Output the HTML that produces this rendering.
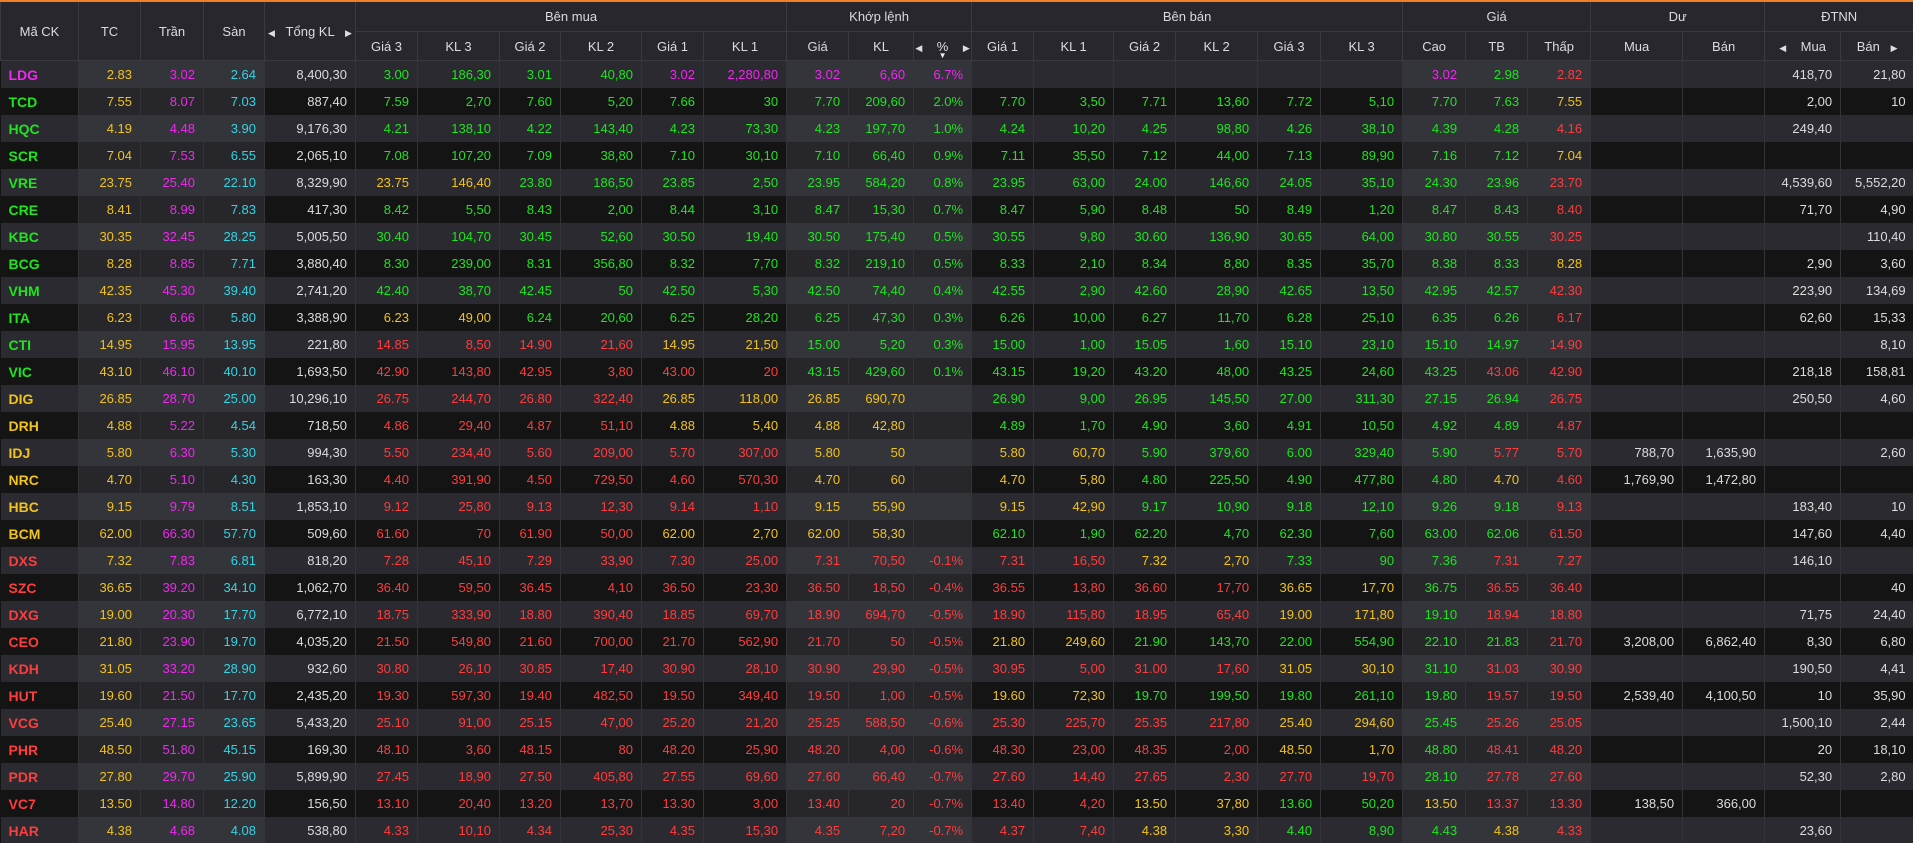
<!DOCTYPE html>
<html><head><meta charset="utf-8">
<style>
html,body{margin:0;padding:0;background:#141414;width:1913px;height:843px;overflow:hidden}
table{border-collapse:collapse;table-layout:fixed;width:1913px;font-family:"Liberation Sans",Arial,sans-serif;font-size:13px}
thead th{background:#27272d;color:#dcdcdc;font-weight:normal;border:1px solid #3a3a42;text-align:center;padding:0;white-space:nowrap}
thead tr.r1 th{height:29px;border-top:2px solid #f08020}
thead tr.r2 th{height:28px}
tbody td{height:27px;padding:0 8px 0 0;text-align:right;border-left:1px solid #333338;white-space:nowrap;overflow:hidden}
tbody tr:nth-child(odd) td{background:#2a2a30}
tbody tr:nth-child(even) td{background:#141414}
tbody tr:nth-child(odd) td:nth-child(2),tbody tr:nth-child(odd) td:nth-child(3),tbody tr:nth-child(odd) td:nth-child(4),
tbody tr:nth-child(odd) td:nth-child(12),tbody tr:nth-child(odd) td:nth-child(13),tbody tr:nth-child(odd) td:nth-child(14),
tbody tr:nth-child(odd) td:nth-child(21),tbody tr:nth-child(odd) td:nth-child(22),tbody tr:nth-child(odd) td:nth-child(23){background:#34343b}
tbody tr:nth-child(even) td:nth-child(2),tbody tr:nth-child(even) td:nth-child(3),tbody tr:nth-child(even) td:nth-child(4),
tbody tr:nth-child(even) td:nth-child(12),tbody tr:nth-child(even) td:nth-child(13),tbody tr:nth-child(even) td:nth-child(14),
tbody tr:nth-child(even) td:nth-child(21),tbody tr:nth-child(even) td:nth-child(22),tbody tr:nth-child(even) td:nth-child(23){background:#26262b}
tbody td:first-child{text-align:left;padding-left:8px;font-weight:bold;font-size:14px;border-left:none}
td{color:#dcdcdc}
.g{color:#1ee51e}.r{color:#ff3d3d}.y{color:#f2c31a}.m{color:#f028f0}.c{color:#2fd6e6}
.ar{font-size:9px;color:#ddd}
.pc{position:relative}
.pc .dn{position:absolute;left:50%;margin-left:-4px;bottom:0;font-size:8px;line-height:9px;color:#eee}
</style></head><body>
<table>
<colgroup>
<col style="width:78px"><col style="width:62px"><col style="width:63px"><col style="width:61px"><col style="width:91px">
<col style="width:62px"><col style="width:82px"><col style="width:61px"><col style="width:81px"><col style="width:62px"><col style="width:83px">
<col style="width:62px"><col style="width:65px"><col style="width:58px">
<col style="width:62px"><col style="width:80px"><col style="width:62px"><col style="width:82px"><col style="width:63px"><col style="width:82px">
<col style="width:63px"><col style="width:62px"><col style="width:63px">
<col style="width:92px"><col style="width:82px"><col style="width:76px"><col style="width:73px">
</colgroup>
<thead>
<tr class="r1">
<th rowspan="2">Mã CK</th><th rowspan="2">TC</th><th rowspan="2">Trần</th><th rowspan="2">Sàn</th><th rowspan="2"><span class="ar">◀</span>&nbsp;&nbsp; Tổng KL &nbsp;&nbsp;<span class="ar">▶</span></th>
<th colspan="6">Bên mua</th><th colspan="3">Khớp lệnh</th><th colspan="6">Bên bán</th><th colspan="3">Giá</th><th colspan="2">Dư</th><th colspan="2">ĐTNN</th>
</tr>
<tr class="r2">
<th>Giá 3</th><th>KL 3</th><th>Giá 2</th><th>KL 2</th><th>Giá 1</th><th>KL 1</th>
<th>Giá</th><th>KL</th><th class="pc"><span class="ar">◀</span>&nbsp;&nbsp;&nbsp; % &nbsp;&nbsp;&nbsp;<span class="ar">▶</span><span class="dn">▼</span></th>
<th>Giá 1</th><th>KL 1</th><th>Giá 2</th><th>KL 2</th><th>Giá 3</th><th>KL 3</th>
<th>Cao</th><th>TB</th><th>Thấp</th><th>Mua</th><th>Bán</th><th><span class="ar">◀</span>&nbsp;&nbsp;&nbsp; Mua</th><th>Bán &nbsp;&nbsp;<span class="ar">▶</span></th>
</tr>
</thead>
<tbody>
<tr><td class="m">LDG</td><td class="y">2.83</td><td class="m">3.02</td><td class="c">2.64</td><td>8,400,30</td><td class="g">3.00</td><td class="g">186,30</td><td class="g">3.01</td><td class="g">40,80</td><td class="m">3.02</td><td class="m">2,280,80</td><td class="m">3.02</td><td class="m">6,60</td><td class="m">6.7%</td><td></td><td></td><td></td><td></td><td></td><td></td><td class="m">3.02</td><td class="g">2.98</td><td class="r">2.82</td><td></td><td></td><td>418,70</td><td>21,80</td></tr>
<tr><td class="g">TCD</td><td class="y">7.55</td><td class="m">8.07</td><td class="c">7.03</td><td>887,40</td><td class="g">7.59</td><td class="g">2,70</td><td class="g">7.60</td><td class="g">5,20</td><td class="g">7.66</td><td class="g">30</td><td class="g">7.70</td><td class="g">209,60</td><td class="g">2.0%</td><td class="g">7.70</td><td class="g">3,50</td><td class="g">7.71</td><td class="g">13,60</td><td class="g">7.72</td><td class="g">5,10</td><td class="g">7.70</td><td class="g">7.63</td><td class="y">7.55</td><td></td><td></td><td>2,00</td><td>10</td></tr>
<tr><td class="g">HQC</td><td class="y">4.19</td><td class="m">4.48</td><td class="c">3.90</td><td>9,176,30</td><td class="g">4.21</td><td class="g">138,10</td><td class="g">4.22</td><td class="g">143,40</td><td class="g">4.23</td><td class="g">73,30</td><td class="g">4.23</td><td class="g">197,70</td><td class="g">1.0%</td><td class="g">4.24</td><td class="g">10,20</td><td class="g">4.25</td><td class="g">98,80</td><td class="g">4.26</td><td class="g">38,10</td><td class="g">4.39</td><td class="g">4.28</td><td class="r">4.16</td><td></td><td></td><td>249,40</td><td></td></tr>
<tr><td class="g">SCR</td><td class="y">7.04</td><td class="m">7.53</td><td class="c">6.55</td><td>2,065,10</td><td class="g">7.08</td><td class="g">107,20</td><td class="g">7.09</td><td class="g">38,80</td><td class="g">7.10</td><td class="g">30,10</td><td class="g">7.10</td><td class="g">66,40</td><td class="g">0.9%</td><td class="g">7.11</td><td class="g">35,50</td><td class="g">7.12</td><td class="g">44,00</td><td class="g">7.13</td><td class="g">89,90</td><td class="g">7.16</td><td class="g">7.12</td><td class="y">7.04</td><td></td><td></td><td></td><td></td></tr>
<tr><td class="g">VRE</td><td class="y">23.75</td><td class="m">25.40</td><td class="c">22.10</td><td>8,329,90</td><td class="y">23.75</td><td class="y">146,40</td><td class="g">23.80</td><td class="g">186,50</td><td class="g">23.85</td><td class="g">2,50</td><td class="g">23.95</td><td class="g">584,20</td><td class="g">0.8%</td><td class="g">23.95</td><td class="g">63,00</td><td class="g">24.00</td><td class="g">146,60</td><td class="g">24.05</td><td class="g">35,10</td><td class="g">24.30</td><td class="g">23.96</td><td class="r">23.70</td><td></td><td></td><td>4,539,60</td><td>5,552,20</td></tr>
<tr><td class="g">CRE</td><td class="y">8.41</td><td class="m">8.99</td><td class="c">7.83</td><td>417,30</td><td class="g">8.42</td><td class="g">5,50</td><td class="g">8.43</td><td class="g">2,00</td><td class="g">8.44</td><td class="g">3,10</td><td class="g">8.47</td><td class="g">15,30</td><td class="g">0.7%</td><td class="g">8.47</td><td class="g">5,90</td><td class="g">8.48</td><td class="g">50</td><td class="g">8.49</td><td class="g">1,20</td><td class="g">8.47</td><td class="g">8.43</td><td class="r">8.40</td><td></td><td></td><td>71,70</td><td>4,90</td></tr>
<tr><td class="g">KBC</td><td class="y">30.35</td><td class="m">32.45</td><td class="c">28.25</td><td>5,005,50</td><td class="g">30.40</td><td class="g">104,70</td><td class="g">30.45</td><td class="g">52,60</td><td class="g">30.50</td><td class="g">19,40</td><td class="g">30.50</td><td class="g">175,40</td><td class="g">0.5%</td><td class="g">30.55</td><td class="g">9,80</td><td class="g">30.60</td><td class="g">136,90</td><td class="g">30.65</td><td class="g">64,00</td><td class="g">30.80</td><td class="g">30.55</td><td class="r">30.25</td><td></td><td></td><td></td><td>110,40</td></tr>
<tr><td class="g">BCG</td><td class="y">8.28</td><td class="m">8.85</td><td class="c">7.71</td><td>3,880,40</td><td class="g">8.30</td><td class="g">239,00</td><td class="g">8.31</td><td class="g">356,80</td><td class="g">8.32</td><td class="g">7,70</td><td class="g">8.32</td><td class="g">219,10</td><td class="g">0.5%</td><td class="g">8.33</td><td class="g">2,10</td><td class="g">8.34</td><td class="g">8,80</td><td class="g">8.35</td><td class="g">35,70</td><td class="g">8.38</td><td class="g">8.33</td><td class="y">8.28</td><td></td><td></td><td>2,90</td><td>3,60</td></tr>
<tr><td class="g">VHM</td><td class="y">42.35</td><td class="m">45.30</td><td class="c">39.40</td><td>2,741,20</td><td class="g">42.40</td><td class="g">38,70</td><td class="g">42.45</td><td class="g">50</td><td class="g">42.50</td><td class="g">5,30</td><td class="g">42.50</td><td class="g">74,40</td><td class="g">0.4%</td><td class="g">42.55</td><td class="g">2,90</td><td class="g">42.60</td><td class="g">28,90</td><td class="g">42.65</td><td class="g">13,50</td><td class="g">42.95</td><td class="g">42.57</td><td class="r">42.30</td><td></td><td></td><td>223,90</td><td>134,69</td></tr>
<tr><td class="g">ITA</td><td class="y">6.23</td><td class="m">6.66</td><td class="c">5.80</td><td>3,388,90</td><td class="y">6.23</td><td class="y">49,00</td><td class="g">6.24</td><td class="g">20,60</td><td class="g">6.25</td><td class="g">28,20</td><td class="g">6.25</td><td class="g">47,30</td><td class="g">0.3%</td><td class="g">6.26</td><td class="g">10,00</td><td class="g">6.27</td><td class="g">11,70</td><td class="g">6.28</td><td class="g">25,10</td><td class="g">6.35</td><td class="g">6.26</td><td class="r">6.17</td><td></td><td></td><td>62,60</td><td>15,33</td></tr>
<tr><td class="g">CTI</td><td class="y">14.95</td><td class="m">15.95</td><td class="c">13.95</td><td>221,80</td><td class="r">14.85</td><td class="r">8,50</td><td class="r">14.90</td><td class="r">21,60</td><td class="y">14.95</td><td class="y">21,50</td><td class="g">15.00</td><td class="g">5,20</td><td class="g">0.3%</td><td class="g">15.00</td><td class="g">1,00</td><td class="g">15.05</td><td class="g">1,60</td><td class="g">15.10</td><td class="g">23,10</td><td class="g">15.10</td><td class="g">14.97</td><td class="r">14.90</td><td></td><td></td><td></td><td>8,10</td></tr>
<tr><td class="g">VIC</td><td class="y">43.10</td><td class="m">46.10</td><td class="c">40.10</td><td>1,693,50</td><td class="r">42.90</td><td class="r">143,80</td><td class="r">42.95</td><td class="r">3,80</td><td class="r">43.00</td><td class="r">20</td><td class="g">43.15</td><td class="g">429,60</td><td class="g">0.1%</td><td class="g">43.15</td><td class="g">19,20</td><td class="g">43.20</td><td class="g">48,00</td><td class="g">43.25</td><td class="g">24,60</td><td class="g">43.25</td><td class="r">43.06</td><td class="r">42.90</td><td></td><td></td><td>218,18</td><td>158,81</td></tr>
<tr><td class="y">DIG</td><td class="y">26.85</td><td class="m">28.70</td><td class="c">25.00</td><td>10,296,10</td><td class="r">26.75</td><td class="r">244,70</td><td class="r">26.80</td><td class="r">322,40</td><td class="y">26.85</td><td class="y">118,00</td><td class="y">26.85</td><td class="y">690,70</td><td></td><td class="g">26.90</td><td class="g">9,00</td><td class="g">26.95</td><td class="g">145,50</td><td class="g">27.00</td><td class="g">311,30</td><td class="g">27.15</td><td class="g">26.94</td><td class="r">26.75</td><td></td><td></td><td>250,50</td><td>4,60</td></tr>
<tr><td class="y">DRH</td><td class="y">4.88</td><td class="m">5.22</td><td class="c">4.54</td><td>718,50</td><td class="r">4.86</td><td class="r">29,40</td><td class="r">4.87</td><td class="r">51,10</td><td class="y">4.88</td><td class="y">5,40</td><td class="y">4.88</td><td class="y">42,80</td><td></td><td class="g">4.89</td><td class="g">1,70</td><td class="g">4.90</td><td class="g">3,60</td><td class="g">4.91</td><td class="g">10,50</td><td class="g">4.92</td><td class="g">4.89</td><td class="r">4.87</td><td></td><td></td><td></td><td></td></tr>
<tr><td class="y">IDJ</td><td class="y">5.80</td><td class="m">6.30</td><td class="c">5.30</td><td>994,30</td><td class="r">5.50</td><td class="r">234,40</td><td class="r">5.60</td><td class="r">209,00</td><td class="r">5.70</td><td class="r">307,00</td><td class="y">5.80</td><td class="y">50</td><td></td><td class="y">5.80</td><td class="y">60,70</td><td class="g">5.90</td><td class="g">379,60</td><td class="g">6.00</td><td class="g">329,40</td><td class="g">5.90</td><td class="r">5.77</td><td class="r">5.70</td><td>788,70</td><td>1,635,90</td><td></td><td>2,60</td></tr>
<tr><td class="y">NRC</td><td class="y">4.70</td><td class="m">5.10</td><td class="c">4.30</td><td>163,30</td><td class="r">4.40</td><td class="r">391,90</td><td class="r">4.50</td><td class="r">729,50</td><td class="r">4.60</td><td class="r">570,30</td><td class="y">4.70</td><td class="y">60</td><td></td><td class="y">4.70</td><td class="y">5,80</td><td class="g">4.80</td><td class="g">225,50</td><td class="g">4.90</td><td class="g">477,80</td><td class="g">4.80</td><td class="y">4.70</td><td class="r">4.60</td><td>1,769,90</td><td>1,472,80</td><td></td><td></td></tr>
<tr><td class="y">HBC</td><td class="y">9.15</td><td class="m">9.79</td><td class="c">8.51</td><td>1,853,10</td><td class="r">9.12</td><td class="r">25,80</td><td class="r">9.13</td><td class="r">12,30</td><td class="r">9.14</td><td class="r">1,10</td><td class="y">9.15</td><td class="y">55,90</td><td></td><td class="y">9.15</td><td class="y">42,90</td><td class="g">9.17</td><td class="g">10,90</td><td class="g">9.18</td><td class="g">12,10</td><td class="g">9.26</td><td class="g">9.18</td><td class="r">9.13</td><td></td><td></td><td>183,40</td><td>10</td></tr>
<tr><td class="y">BCM</td><td class="y">62.00</td><td class="m">66.30</td><td class="c">57.70</td><td>509,60</td><td class="r">61.60</td><td class="r">70</td><td class="r">61.90</td><td class="r">50,00</td><td class="y">62.00</td><td class="y">2,70</td><td class="y">62.00</td><td class="y">58,30</td><td></td><td class="g">62.10</td><td class="g">1,90</td><td class="g">62.20</td><td class="g">4,70</td><td class="g">62.30</td><td class="g">7,60</td><td class="g">63.00</td><td class="g">62.06</td><td class="r">61.50</td><td></td><td></td><td>147,60</td><td>4,40</td></tr>
<tr><td class="r">DXS</td><td class="y">7.32</td><td class="m">7.83</td><td class="c">6.81</td><td>818,20</td><td class="r">7.28</td><td class="r">45,10</td><td class="r">7.29</td><td class="r">33,90</td><td class="r">7.30</td><td class="r">25,00</td><td class="r">7.31</td><td class="r">70,50</td><td class="r">-0.1%</td><td class="r">7.31</td><td class="r">16,50</td><td class="y">7.32</td><td class="y">2,70</td><td class="g">7.33</td><td class="g">90</td><td class="g">7.36</td><td class="r">7.31</td><td class="r">7.27</td><td></td><td></td><td>146,10</td><td></td></tr>
<tr><td class="r">SZC</td><td class="y">36.65</td><td class="m">39.20</td><td class="c">34.10</td><td>1,062,70</td><td class="r">36.40</td><td class="r">59,50</td><td class="r">36.45</td><td class="r">4,10</td><td class="r">36.50</td><td class="r">23,30</td><td class="r">36.50</td><td class="r">18,50</td><td class="r">-0.4%</td><td class="r">36.55</td><td class="r">13,80</td><td class="r">36.60</td><td class="r">17,70</td><td class="y">36.65</td><td class="y">17,70</td><td class="g">36.75</td><td class="r">36.55</td><td class="r">36.40</td><td></td><td></td><td></td><td>40</td></tr>
<tr><td class="r">DXG</td><td class="y">19.00</td><td class="m">20.30</td><td class="c">17.70</td><td>6,772,10</td><td class="r">18.75</td><td class="r">333,90</td><td class="r">18.80</td><td class="r">390,40</td><td class="r">18.85</td><td class="r">69,70</td><td class="r">18.90</td><td class="r">694,70</td><td class="r">-0.5%</td><td class="r">18.90</td><td class="r">115,80</td><td class="r">18.95</td><td class="r">65,40</td><td class="y">19.00</td><td class="y">171,80</td><td class="g">19.10</td><td class="r">18.94</td><td class="r">18.80</td><td></td><td></td><td>71,75</td><td>24,40</td></tr>
<tr><td class="r">CEO</td><td class="y">21.80</td><td class="m">23.90</td><td class="c">19.70</td><td>4,035,20</td><td class="r">21.50</td><td class="r">549,80</td><td class="r">21.60</td><td class="r">700,00</td><td class="r">21.70</td><td class="r">562,90</td><td class="r">21.70</td><td class="r">50</td><td class="r">-0.5%</td><td class="y">21.80</td><td class="y">249,60</td><td class="g">21.90</td><td class="g">143,70</td><td class="g">22.00</td><td class="g">554,90</td><td class="g">22.10</td><td class="g">21.83</td><td class="r">21.70</td><td>3,208,00</td><td>6,862,40</td><td>8,30</td><td>6,80</td></tr>
<tr><td class="r">KDH</td><td class="y">31.05</td><td class="m">33.20</td><td class="c">28.90</td><td>932,60</td><td class="r">30.80</td><td class="r">26,10</td><td class="r">30.85</td><td class="r">17,40</td><td class="r">30.90</td><td class="r">28,10</td><td class="r">30.90</td><td class="r">29,90</td><td class="r">-0.5%</td><td class="r">30.95</td><td class="r">5,00</td><td class="r">31.00</td><td class="r">17,60</td><td class="y">31.05</td><td class="y">30,10</td><td class="g">31.10</td><td class="r">31.03</td><td class="r">30.90</td><td></td><td></td><td>190,50</td><td>4,41</td></tr>
<tr><td class="r">HUT</td><td class="y">19.60</td><td class="m">21.50</td><td class="c">17.70</td><td>2,435,20</td><td class="r">19.30</td><td class="r">597,30</td><td class="r">19.40</td><td class="r">482,50</td><td class="r">19.50</td><td class="r">349,40</td><td class="r">19.50</td><td class="r">1,00</td><td class="r">-0.5%</td><td class="y">19.60</td><td class="y">72,30</td><td class="g">19.70</td><td class="g">199,50</td><td class="g">19.80</td><td class="g">261,10</td><td class="g">19.80</td><td class="r">19.57</td><td class="r">19.50</td><td>2,539,40</td><td>4,100,50</td><td>10</td><td>35,90</td></tr>
<tr><td class="r">VCG</td><td class="y">25.40</td><td class="m">27.15</td><td class="c">23.65</td><td>5,433,20</td><td class="r">25.10</td><td class="r">91,00</td><td class="r">25.15</td><td class="r">47,00</td><td class="r">25.20</td><td class="r">21,20</td><td class="r">25.25</td><td class="r">588,50</td><td class="r">-0.6%</td><td class="r">25.30</td><td class="r">225,70</td><td class="r">25.35</td><td class="r">217,80</td><td class="y">25.40</td><td class="y">294,60</td><td class="g">25.45</td><td class="r">25.26</td><td class="r">25.05</td><td></td><td></td><td>1,500,10</td><td>2,44</td></tr>
<tr><td class="r">PHR</td><td class="y">48.50</td><td class="m">51.80</td><td class="c">45.15</td><td>169,30</td><td class="r">48.10</td><td class="r">3,60</td><td class="r">48.15</td><td class="r">80</td><td class="r">48.20</td><td class="r">25,90</td><td class="r">48.20</td><td class="r">4,00</td><td class="r">-0.6%</td><td class="r">48.30</td><td class="r">23,00</td><td class="r">48.35</td><td class="r">2,00</td><td class="y">48.50</td><td class="y">1,70</td><td class="g">48.80</td><td class="r">48.41</td><td class="r">48.20</td><td></td><td></td><td>20</td><td>18,10</td></tr>
<tr><td class="r">PDR</td><td class="y">27.80</td><td class="m">29.70</td><td class="c">25.90</td><td>5,899,90</td><td class="r">27.45</td><td class="r">18,90</td><td class="r">27.50</td><td class="r">405,80</td><td class="r">27.55</td><td class="r">69,60</td><td class="r">27.60</td><td class="r">66,40</td><td class="r">-0.7%</td><td class="r">27.60</td><td class="r">14,40</td><td class="r">27.65</td><td class="r">2,30</td><td class="r">27.70</td><td class="r">19,70</td><td class="g">28.10</td><td class="r">27.78</td><td class="r">27.60</td><td></td><td></td><td>52,30</td><td>2,80</td></tr>
<tr><td class="r">VC7</td><td class="y">13.50</td><td class="m">14.80</td><td class="c">12.20</td><td>156,50</td><td class="r">13.10</td><td class="r">20,40</td><td class="r">13.20</td><td class="r">13,70</td><td class="r">13.30</td><td class="r">3,00</td><td class="r">13.40</td><td class="r">20</td><td class="r">-0.7%</td><td class="r">13.40</td><td class="r">4,20</td><td class="y">13.50</td><td class="y">37,80</td><td class="g">13.60</td><td class="g">50,20</td><td class="y">13.50</td><td class="r">13.37</td><td class="r">13.30</td><td>138,50</td><td>366,00</td><td></td><td></td></tr>
<tr><td class="r">HAR</td><td class="y">4.38</td><td class="m">4.68</td><td class="c">4.08</td><td>538,80</td><td class="r">4.33</td><td class="r">10,10</td><td class="r">4.34</td><td class="r">25,30</td><td class="r">4.35</td><td class="r">15,30</td><td class="r">4.35</td><td class="r">7,20</td><td class="r">-0.7%</td><td class="r">4.37</td><td class="r">7,40</td><td class="y">4.38</td><td class="y">3,30</td><td class="g">4.40</td><td class="g">8,90</td><td class="g">4.43</td><td class="y">4.38</td><td class="r">4.33</td><td></td><td></td><td>23,60</td><td></td></tr>
</tbody>
</table>
</body></html>
